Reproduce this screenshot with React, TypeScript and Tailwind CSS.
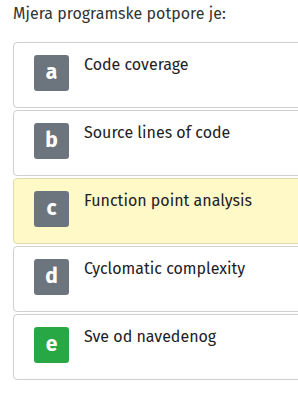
const options = [
  { letter: "a", text: "Code coverage" },
  { letter: "b", text: "Source lines of code" },
  { letter: "c", text: "Function point analysis", selected: true },
  { letter: "d", text: "Cyclomatic complexity" },
  { letter: "e", text: "Sve od navedenog", correct: true },
];

export default function App() {
  return (
    <div
      className="w-[298px] h-[398px] overflow-hidden bg-white text-[#1d2125]"
      style={{ fontFamily: '"Fira Sans", "Noto Sans", "Open Sans", sans-serif' }}
    >
      <div className="pl-[13px] pt-[4px]">
        <p className="text-[16px] leading-[20px] text-[#333]">Mjera programske potpore je:</p>
        <div className="mt-[18px] flex flex-col gap-[2px] w-[320px]">
          {options.map((o) => (
            <div
              key={o.letter}
              className={
                "h-[66px] border rounded-[4px] flex items-start pl-[20px] pt-[12px] " +
                (o.selected ? "bg-[#fff8c7] border-[#e0d9a8]" : "bg-white border-[#cfcfcf]")
              }
            >
              <div
                className={
                  "w-[35px] h-[36px] rounded-[3px] flex items-center justify-center text-white font-bold text-[21px] leading-none pb-[2px] " +
                  (o.correct ? "bg-[#28a745]" : "bg-[#6c757d]")
                }
              >
                {o.letter}
              </div>
              <span className="ml-[15px] text-[16px] leading-[20px] font-normal">{o.text}</span>
            </div>
          ))}
        </div>
      </div>
    </div>
  );
}
